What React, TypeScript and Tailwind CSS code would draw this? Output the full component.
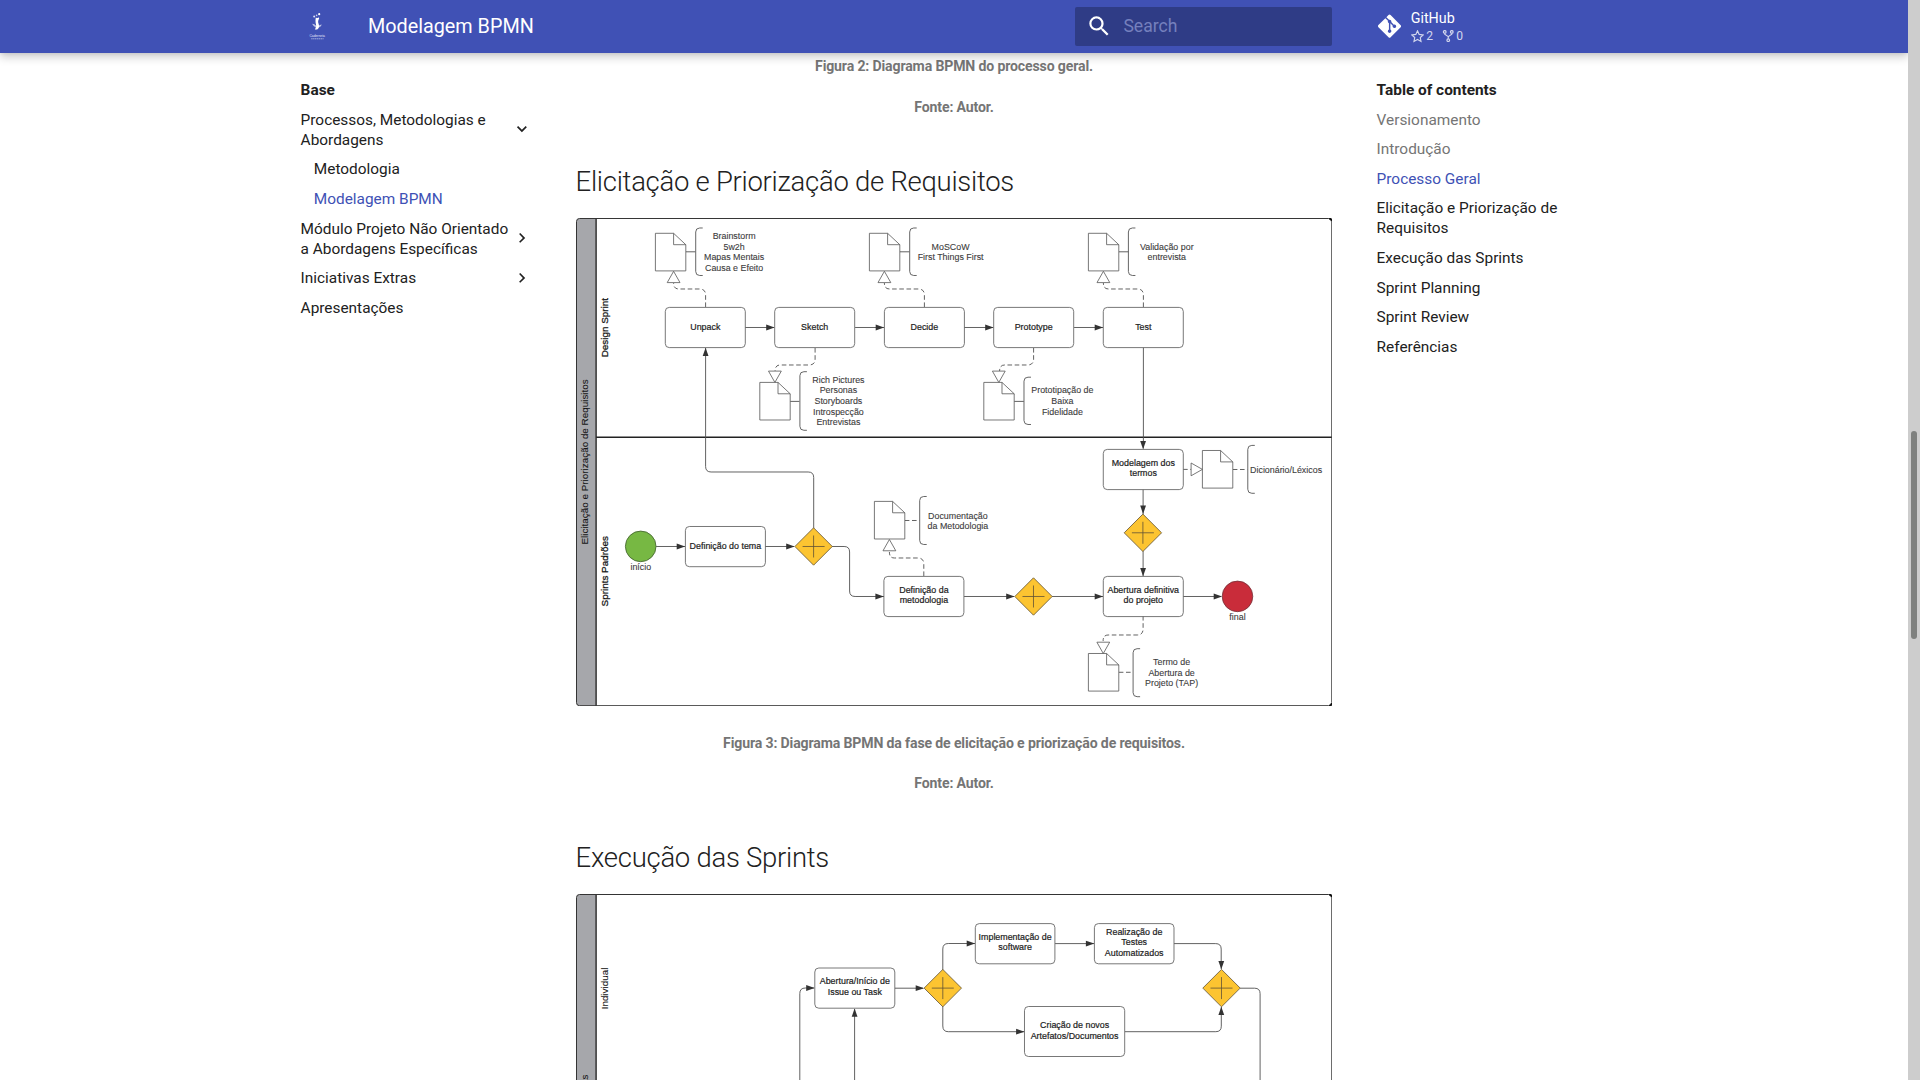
import React from "react";
import { FaGitAlt } from "react-icons/fa";

type Pt = { x: number; y: number };

function Label({ x, y, lines, box = false }: Pt & { lines: string[]; box?: boolean }) {
  return (
    <g fill={box ? "#1c1c1c" : "#3c3c3c"} stroke={box ? "#1c1c1c" : "#3c3c3c"} strokeWidth={box ? 0.2 : 0.1}>
      {lines.map((line, i) => (
        <text key={line} x={x} y={y + i * 10.67} fontSize={8.9} textAnchor="middle">
          {line}
        </text>
      ))}
    </g>
  );
}

function Task({ x, y, w = 80, h = 40.2, ty, lines }: Pt & { w?: number; h?: number; ty: number; lines: string[] }) {
  return (
    <g>
      <rect x={x} y={y} width={w} height={h} rx={4} fill="#fff" stroke="#555" strokeWidth={0.8} />
      <Label x={x + w / 2} y={ty} lines={lines} box />
    </g>
  );
}

function Doc({ x, y, h = 37.6 }: Pt & { h?: number }) {
  return (
    <path
      d={`M${x} ${y}h18.2l12.2 11.4v${h - 11.4}h-30.4zM${x + 18.2} ${y}v11.4h12.2`}
      fill="#fff"
      stroke="#555"
      strokeWidth={0.8}
    />
  );
}

function Bracket({ x, y, y2 }: Pt & { y2: number }) {
  return (
    <path
      d={`M${x + 7.3} ${y}h-3q-4 0-4 4V${y2 - 4}q0 4 4 4h3`}
      fill="none"
      stroke="#555"
      strokeWidth={0.9}
    />
  );
}

function Gateway({ x, y }: Pt) {
  return (
    <g stroke="#5f5236" strokeWidth={0.8}>
      <path d={`M${x} ${y - 18.7}l18.7 18.7l-18.7 18.7l-18.7-18.7z`} fill="#fcc431" />
      <path d={`M${x - 11} ${y}h22M${x} ${y - 11}v22`} />
    </g>
  );
}

const ROTATION = { right: 0, down: 90, left: 180, up: 270 };

function Head({ x, y, dir = "right" }: Pt & { dir?: keyof typeof ROTATION }) {
  return <path d="M0 0l-8.4-2.9v5.8z" fill="#333" transform={`translate(${x} ${y}) rotate(${ROTATION[dir]})`} />;
}

function OpenHead({ x, y, dir = "up" }: Pt & { dir?: keyof typeof ROTATION }) {
  return (
    <path
      d="M0 0l-11.3-6.4v12.8z"
      fill="#fff"
      stroke="#555"
      strokeWidth={0.8}
      transform={`translate(${x} ${y}) rotate(${ROTATION[dir]})`}
    />
  );
}

function Flow({ d, dash = false }: { d: string; dash?: boolean }) {
  return <path d={d} fill="none" stroke="#505050" strokeWidth={0.9} strokeDasharray={dash ? "4.6 2.6" : undefined} />;
}

function LaneLabel({ x, y, text, anchor = "middle", heavy = false }: Pt & { text: string; anchor?: "middle" | "end"; heavy?: boolean }) {
  return (
    <text
      transform={`translate(${x} ${y}) rotate(-90)`}
      fontSize={9.9}
      textAnchor={anchor}
      fill="#151515"
      stroke="#151515"
      strokeWidth={heavy ? 0.28 : 0.08}
    >
      {text}
    </text>
  );
}

function Pool({ top, bottom }: { top: number; bottom: number }) {
  return (
    <g>
      <rect x={576.4} y={top} width={755.4} height={bottom - top} rx={3} fill="#fff" />
      <path d={`M596 ${top}h-16.6q-3 0-3 3V${bottom - 3}q0 3 3 3h16.6z`} fill="#a6a7ab" />
      <rect x={576.4} y={top} width={755.3} height={bottom - top} rx={3} fill="none" stroke="#333" strokeWidth={1} />
      <path d={`M596 ${top}V${bottom}`} stroke="#333" strokeWidth={1.5} />
      <path d={`M1329 ${top}q2.6 0 2.6 2.8M1329 ${bottom}q2.6 0 2.6-2.8`} stroke="#111" strokeWidth={1.8} fill="none" />
    </g>
  );
}

function ElicitationDiagram() {
  return (
    <svg viewBox="575.9 218 756.8 488.4" className="block h-[488.4px] w-full" fontFamily='"Liberation Sans", Arial, sans-serif'>
      <Pool top={218.5} bottom={705.7} />
      <path d="M596 437.2H1331.6" stroke="#222" strokeWidth={1.5} />
      <LaneLabel x={587.5} y={461.9} text="Elicitação e Priorização de Requisitos" />
      <LaneLabel x={607.7} y={327.7} text="Design Sprint" heavy />
      <LaneLabel x={607.7} y={571.3} text="Sprints Padrões" heavy />

      <Flow d="M745 327.5h29M855 327.5h29M964 327.5h29M1074 327.5h29" />
      <Flow d="M1143.3 347.5v101M1143 489.5v25M1143 551v25" />
      <Flow d="M656 546.5h29M765 546.5h29M832 546.5h12q5.5 0 5.5 5.5v39q0 5.5 5.5 5.5h29" />
      <Flow d="M813.6 528V477.5q0-5.5-5.5-5.5H711q-5.5 0-5.5-5.5V348" />
      <Flow d="M964 596.5h50M1052 596.5h51M1183 596.5h38" />
      <Flow dash d="M705.5 307v-12q0-6-6-6h-21q-5 0-5-6" />
      <Flow dash d="M924.3 307v-12q0-6-6-6h-29q-5 0-5-6" />
      <Flow dash d="M1143.3 307v-12q0-6-6-6h-29q-5 0-5-6" />
      <Flow dash d="M815 348v11q0 6-6 6h-29q-5 0-5 6" />
      <Flow dash d="M1033.5 348v11q0 6-6 6h-23q-5 0-5 6" />
      <Flow dash d="M923.7 576v-12q0-6-6-6h-23.4q-5 0-5-6" />
      <Flow dash d="M1143 616v13q0 6-6 6h-29q-5 0-5 6" />
      <Flow dash d="M904.7 520.5h14.6M1183 469.4h8.3M1232.7 469.5h14.6M1118.7 672.3h14" />
      <Flow d="M685.7 251.8h9.6M899.7 251.8h9.6M1118.7 251.8h9.6M790 401.4h9.3M1014 401.4h9.7" />

      <Task x={665.2} y={307.4} ty={330} lines={["Unpack"]} />
      <Task x={774.6} y={307.4} ty={330} lines={["Sketch"]} />
      <Task x={884.3} y={307.4} ty={330} lines={["Decide"]} />
      <Task x={993.6} y={307.4} ty={330} lines={["Prototype"]} />
      <Task x={1103.2} y={307.4} ty={330} lines={["Test"]} />
      <Task x={685.3} y={526.5} ty={549} lines={["Definição do tema"]} />
      <Task x={883.8} y={576.4} ty={592.7} lines={["Definição da", "metodologia"]} />
      <Task x={1103.2} y={576.4} ty={592.7} lines={["Abertura definitiva", "do projeto"]} />
      <Task x={1103.2} y={449.4} ty={465.7} lines={["Modelagem dos", "termos"]} />

      <Doc x={655.3} y={233.3} />
      <Doc x={869.3} y={233.3} />
      <Doc x={1088.3} y={233.3} />
      <Doc x={759.7} y={382.4} />
      <Doc x={983.7} y={382.4} />
      <Doc x={874.3} y={501.4} />
      <Doc x={1202.3} y={450.5} />
      <Doc x={1088.3} y={653.5} />

      <Bracket x={695.3} y={228} y2={275.5} />
      <Bracket x={909.3} y={228} y2={275.5} />
      <Bracket x={1128} y={228} y2={275.5} />
      <Bracket x={799.5} y={371.7} y2={430.3} />
      <Bracket x={1023.6} y={377.2} y2={424.5} />
      <Bracket x={919.3} y={496.5} y2={544.5} />
      <Bracket x={1247.4} y={445.4} y2={493.3} />
      <Bracket x={1132.7} y={648.7} y2={696.7} />

      <OpenHead x={673.5} y={271.3} />
      <OpenHead x={884.3} y={271.3} />
      <OpenHead x={1103.3} y={271.3} />
      <OpenHead x={889.3} y={539.5} />
      <OpenHead x={774.8} y={382.4} dir="down" />
      <OpenHead x={998.7} y={382.4} dir="down" />
      <OpenHead x={1103.2} y={653.5} dir="down" />
      <OpenHead x={1202.3} y={469.4} dir="right" />

      <Head x={774.5} y={327.5} />
      <Head x={884} y={327.5} />
      <Head x={993.5} y={327.5} />
      <Head x={1103} y={327.5} />
      <Head x={705.5} y={347.7} dir="up" />
      <Head x={1143} y={449.3} dir="down" />
      <Head x={1143} y={514} dir="down" />
      <Head x={1143} y={576.3} dir="down" />
      <Head x={685} y={546.5} />
      <Head x={794.5} y={546.5} />
      <Head x={883.7} y={596.5} />
      <Head x={1014.5} y={596.5} />
      <Head x={1103} y={596.5} />
      <Head x={1222} y={596.5} />

      <Gateway x={813.5} y={546.5} />
      <Gateway x={1033.4} y={596.5} />
      <Gateway x={1142.8} y={532.8} />
      <circle cx={640.6} cy={546.4} r={15.3} fill="#77b843" stroke="#4a6a35" strokeWidth={0.9} />
      <circle cx={1237.4} cy={596.4} r={15.3} fill="#c92c3a" stroke="#74323a" strokeWidth={0.8} />

      <Label x={640.7} y={569.8} lines={["início"]} />
      <Label x={1237.4} y={619.6} lines={["final"]} />
      <Label x={734} y={239} lines={["Brainstorm", "5w2h", "Mapas Mentais", "Causa e Efeito"]} />
      <Label x={950.5} y={249.7} lines={["MoSCoW", "First Things First"]} />
      <Label x={1166.7} y={249.7} lines={["Validação por", "entrevista"]} />
      <Label x={838.3} y={382.7} lines={["Rich Pictures", "Personas", "Storyboards", "Introspecção", "Entrevistas"]} />
      <Label x={1062.3} y={393.4} lines={["Prototipação de", "Baixa", "Fidelidade"]} />
      <Label x={957.8} y={518.6} lines={["Documentação", "da Metodologia"]} />
      <Label x={1286} y={472.6} lines={["Dicionário/Léxicos"]} />
      <Label x={1171.5} y={665} lines={["Termo de", "Abertura de", "Projeto (TAP)"]} />
    </svg>
  );
}

function SprintsDiagram() {
  return (
    <svg viewBox="575.9 894 756.8 488" className="block h-[488px] w-full shrink-0" fontFamily='"Liberation Sans", Arial, sans-serif'>
      <Pool top={894.5} bottom={1381} />
      <LaneLabel x={587.5} y={1074.5} text="Execução das Sprints" anchor="end" />
      <LaneLabel x={607.7} y={988.5} text="Individual" />

      <Flow d="M799.7 1100V993.5q0-5.5 5.5-5.5H814M854.5 1100V1009M894.7 988.2H923" />
      <Flow d="M942.7 970V949q0-5.5 5.5-5.5H975M942.7 1006v20q0 5.7 5.5 5.7H1024" />
      <Flow d="M1055 943.6h39M1174 943.6h41.6q5.5 0 5.5 5.5V969M1124.7 1031.7h91q5.5 0 5.5-5.5V1007" />
      <Flow d="M1240 988.2h14.5q5.5 0 5.5 5.5V1100" />

      <Task x={814.7} y={968} ty={984.3} lines={["Abertura/Início de", "Issue ou Task"]} />
      <Task x={975.2} y={923.6} w={79.6} ty={939.8} lines={["Implementação de", "software"]} />
      <Task x={1094.3} y={923.6} w={79.6} ty={934.8} lines={["Realização de", "Testes", "Automatizados"]} />
      <Task x={1024.4} y={1006.5} w={100.2} h={50} ty={1027.9} lines={["Criação de novos", "Artefatos/Documentos"]} />

      <Head x={814.5} y={988} />
      <Head x={924} y={988.2} />
      <Head x={975} y={943.5} />
      <Head x={1094.2} y={943.6} />
      <Head x={1024.4} y={1031.7} />
      <Head x={854.5} y={1008.4} dir="up" />
      <Head x={1221.2} y={969.3} dir="down" />
      <Head x={1221.2} y={1006.7} dir="up" />
      <Gateway x={942.7} y={988.1} />
      <Gateway x={1221.4} y={988.1} />
    </svg>
  );
}

function Chevron({ open = false }: { open?: boolean }) {
  return (
    <svg viewBox="0 0 24 24" className={open ? "mb-[2px] size-[19.8px] shrink-0 rotate-90" : "mb-[1px] size-[19.8px] shrink-0"}>
      <path fill="#212121" d="M8.59 16.58 13.17 12 8.59 7.41 10 6l6 6-6 6-1.41-1.42Z" />
    </svg>
  );
}

function Logo() {
  return (
    <svg viewBox="0 0 26.4 26.4" className="size-[26.4px]" fontFamily='"Liberation Sans", Arial, sans-serif'>
      <g fill="#fff">
        <circle cx="15.2" cy="1.2" r="1.1" />
        <circle cx="10.2" cy="3.6" r="1" opacity=".85" />
        <circle cx="12.6" cy="2.4" r=".8" opacity=".7" />
        <path d="M11.8 4.6c.8.8 1.8.6 2.8-.4l.6 1.2c-.8 1.2-1.2 2.4-1 4.2l.6 2c.6 2.2.2 4-1.6 5h-2.4c1.2-1.6 1.6-3.2 1.2-5-.6-2.4-.6-4.4-.2-7z" />
        <path
          d="M8.2 10.8c1.6.2 2.8.8 3.8 1.8v1.8c-1.8-.6-3-1.8-3.8-3.6zM14.6 12.8c.8-.8 1.8-1.2 3.2-1.4-.6 1.6-1.6 2.6-3 3z"
          opacity=".65"
        />
      </g>
      <text x="13.2" y="23.8" fontSize="4.2" textAnchor="middle" fill="#e3e6f7" textLength="15.5" lengthAdjust="spacingAndGlyphs">
        Caderneta
      </text>
      <path d="M7.2 25.8h12.4" stroke="#aeb6e2" strokeWidth=".9" strokeDasharray="1.5 .4" />
    </svg>
  );
}

function Header() {
  return (
    <header className="relative z-10 flex h-[53px] shrink-0 items-center bg-[#4051b5] text-white shadow-[0_0_4px_#0000001a,0_4px_9px_#00000033]">
      <div className="ml-[304px] flex w-[64px] shrink-0 items-center">
        <Logo />
      </div>
      <div className="w-[707px] text-[19.8px] leading-[53px]">Modelagem BPMN</div>
      <div className="flex h-[39px] w-[257px] items-center rounded-[2px] bg-[#2f3c86] pl-[11px]">
        <svg viewBox="0 0 24 24" className="size-[26.4px]">
          <path
            fill="#fff"
            d="M9.5 3A6.5 6.5 0 0 1 16 9.5c0 1.61-.59 3.09-1.56 4.23l.27.27h.79l5 5-1.5 1.5-5-5v-.79l-.27-.27A6.516 6.516 0 0 1 9.5 16 6.5 6.5 0 0 1 3 9.5 6.5 6.5 0 0 1 9.5 3m0 2C7 5 5 7 5 9.5S7 14 9.5 14 14 12 14 9.5 12 5 9.5 5Z"
          />
        </svg>
        <span className="ml-[11px] text-[17.6px] text-[#7580bd]">Search</span>
      </div>
      <div className="ml-[45.6px] flex items-center">
        <FaGitAlt className="h-[26.4px] w-[23.1px]" />
        <div className="ml-[10px] pt-px">
          <div className="text-[14.3px] leading-[18px]">GitHub</div>
          <div className="flex items-center text-[12.1px] leading-[18px] text-[#d3d7ee]">
            <svg viewBox="0 0 16 16" className="mr-[2.6px] size-[13px]" fill="none" stroke="currentColor" strokeWidth="1.4" strokeLinejoin="miter">
              <path d="M8 1l2.05 4.45 4.95.62-3.6 3.25.93 4.83L8 11.7l-4.33 2.45.93-4.83L1 6.07l4.95-.62z" />
            </svg>
            <span className="w-[15.4px]">2</span>
            <svg viewBox="0 0 16 16" className="mr-[2px] size-[12.5px]" fill="none" stroke="currentColor" strokeWidth="1.5">
              <circle cx="3.5" cy="2.4" r="1.7" />
              <circle cx="12.5" cy="2.4" r="1.7" />
              <circle cx="8" cy="13" r="1.7" />
              <path d="M3.5 4.1v1.2L8 8.5l4.5-3.2V4.1M8 8.3v3" />
            </svg>
            <span>0</span>
          </div>
        </div>
      </div>
    </header>
  );
}

const contents = [
  { text: "Versionamento", tone: "text-[#757575]" },
  { text: "Introdução", tone: "text-[#757575]" },
  { text: "Processo Geral", tone: "text-[#4051b5]" },
  { text: "Elicitação e Priorização de Requisitos", tone: "" },
  { text: "Execução das Sprints", tone: "" },
  { text: "Sprint Planning", tone: "" },
  { text: "Sprint Review", tone: "" },
  { text: "Referências", tone: "" },
];

function Caption({ children }: { children: React.ReactNode }) {
  return (
    <h6 className="text-center text-[14.08px] leading-[22.5px] font-bold tracking-[-0.01em] text-[#757575]">{children}</h6>
  );
}

function Title({ children }: { children: React.ReactNode }) {
  return <h2 className="text-[27.5px] leading-[38.5px] font-light tracking-[-0.01em] text-[#212121]">{children}</h2>;
}

export default function App() {
  return (
    <div className="flex h-[1080px] w-[1920px] overflow-hidden bg-white font-['Roboto',sans-serif] text-[#212121]">
      <div className="flex w-[1908px] flex-col overflow-hidden">
        <Header />
        <main className="flex min-h-0 flex-1 pl-[300.6px]">
          <nav className="w-[231px] shrink-0 pt-[27px] text-[15.4px] leading-[20.02px]">
            <div className="font-bold">Base</div>
            <ul className="mt-[9.625px] flex flex-col gap-[9.625px]">
              <li className="flex items-center justify-between">
                <span className="w-[208px]">Processos, Metodologias e Abordagens</span>
                <Chevron open />
              </li>
              <li className="pl-[13.2px]">Metodologia</li>
              <li className="pl-[13.2px] text-[#4051b5]">Modelagem BPMN</li>
              <li className="flex items-center justify-between">
                <span className="w-[210px]">Módulo Projeto Não Orientado a Abordagens Específicas</span>
                <Chevron />
              </li>
              <li className="flex h-[20.02px] items-center justify-between">
                <span>Iniciativas Extras</span>
                <Chevron />
              </li>
              <li>Apresentações</li>
            </ul>
          </nav>
          <article className="ml-[44px] flex w-[756.8px] shrink-0 flex-col overflow-hidden pt-[2px]">
            <Caption>Figura 2: Diagrama BPMN do processo geral.</Caption>
            <div className="mt-[18px]">
              <Caption>Fonte: Autor.</Caption>
            </div>
            <div className="mt-[44.5px]">
              <Title>Elicitação e Priorização de Requisitos</Title>
            </div>
            <div className="mt-[17px]">
              <ElicitationDiagram />
            </div>
            <div className="mt-[25.6px]">
              <Caption>Figura 3: Diagrama BPMN da fase de elicitação e priorização de requisitos.</Caption>
            </div>
            <div className="mt-[17.5px]">
              <Caption>Fonte: Autor.</Caption>
            </div>
            <div className="mt-[44.5px]">
              <Title>Execução das Sprints</Title>
            </div>
            <div className="mt-[16.5px]">
              <SprintsDiagram />
            </div>
          </article>
          <aside className="ml-[44.2px] w-[231px] shrink-0 pt-[27px] text-[15.4px] leading-[20.02px]">
            <div className="font-bold">Table of contents</div>
            <ul className="mt-[9.625px] flex flex-col gap-[9.6px]">
              {contents.map((item) => (
                <li key={item.text} className={item.tone}>
                  {item.text}
                </li>
              ))}
            </ul>
          </aside>
        </main>
      </div>
      <div className="flex w-[12px] justify-center bg-[#cdcdcd] pt-[431px]">
        <div className="h-[208px] w-[6px] rounded-full bg-[#7f817f]" />
      </div>
    </div>
  );
}
